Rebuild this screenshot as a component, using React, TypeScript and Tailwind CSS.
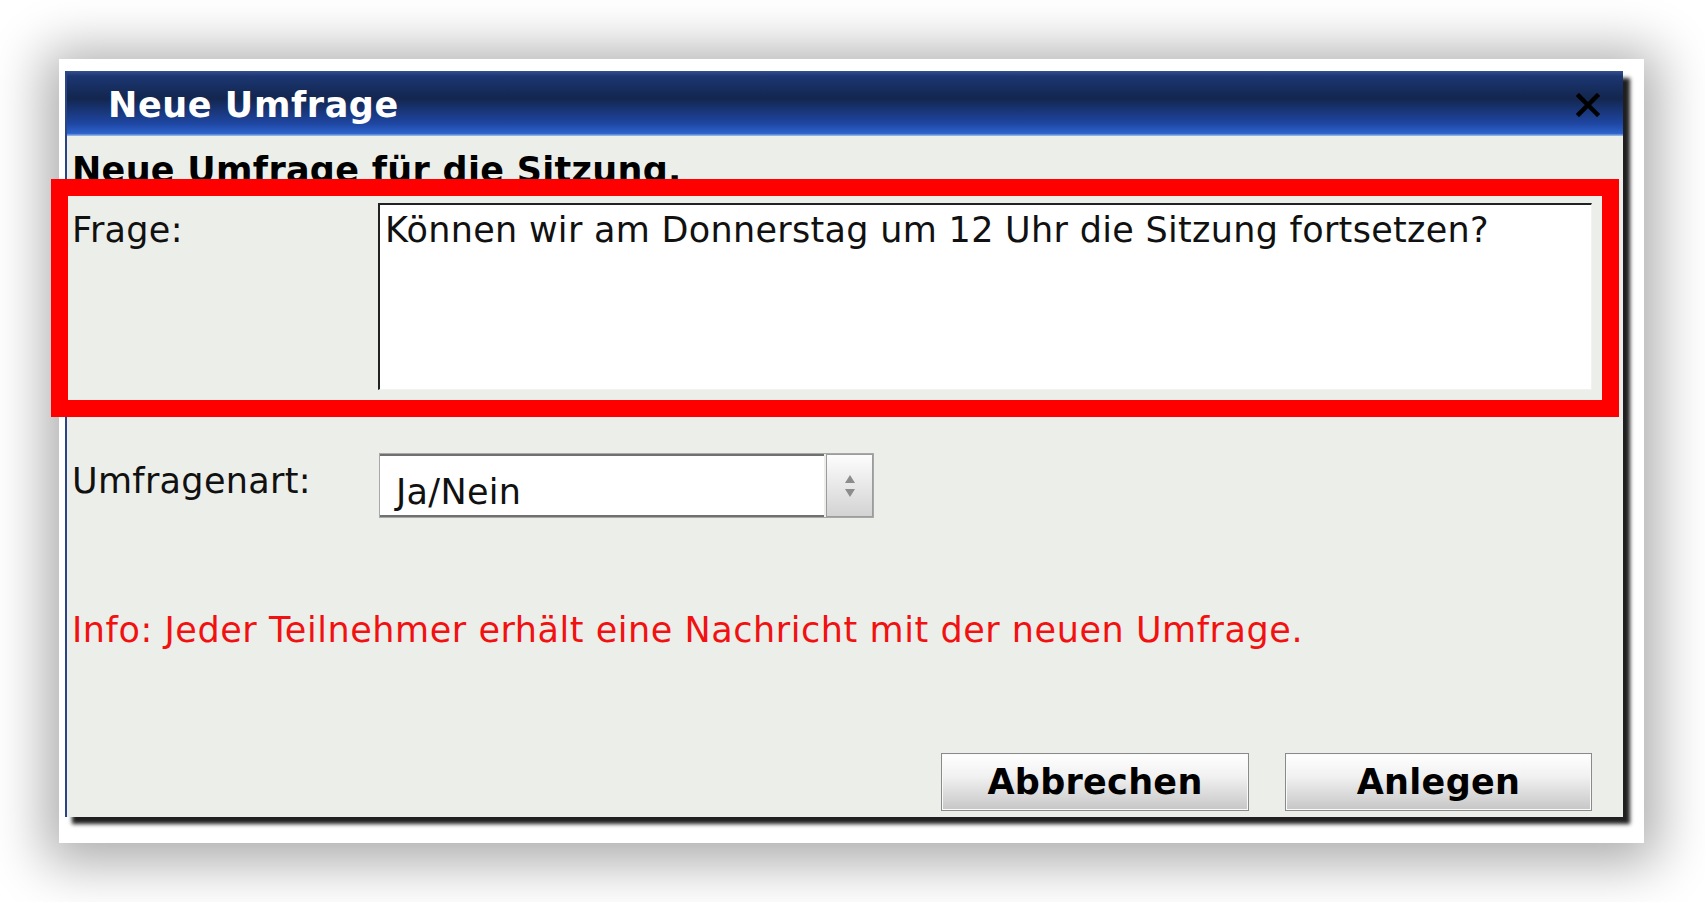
export default function App() {
  return (
    <div className="min-h-screen bg-white pl-[59px] pt-[59px] font-['DejaVu_Sans','Verdana',sans-serif] text-[35px] leading-[40px] tracking-[0.3px] text-[#111]">
      {/* screenshot frame */}
      <div className="relative w-[1585px] h-[784px] bg-white pl-[6px] pt-[12px] shadow-[0_6px_50px_14px_rgba(0,0,0,0.33)]">
        {/* dialog */}
        <div className="flex flex-col w-[1558px] h-[746px] border-l-2 border-[#2b4584] shadow-[7px_7px_4px_rgba(0,0,0,0.88)]">
          {/* title bar */}
          <div className="flex items-center justify-between h-[65px] pl-[41px] pr-[23px] bg-[linear-gradient(to_bottom,#34508c_0%,#1b3672_8%,#13264f_42%,#1e45a0_80%,#2c62cb_96%,#a9c0ea_100%)]">
            <span className="font-bold text-white pt-[2px] tracking-[0.6px]">Neue Umfrage</span>
            <svg width="24" height="24" viewBox="0 0 24 24" className="mt-[2px]">
              <path d="M3 3 L21 21 M21 3 L3 21" stroke="#000" strokeWidth="4.5" strokeLinecap="square" />
            </svg>
          </div>

          {/* body */}
          <div className="flex flex-col flex-1 bg-[#eceee9] pl-[5px]">
            <div className="pt-[14px] font-bold text-black">Neue Umfrage für die Sitzung.</div>

            <div className="flex items-start mt-[13px]">
              <div className="w-[306px] pt-[7px]">Frage:</div>
              <div className="w-[1214px] h-[187px] bg-white border-t-2 border-l-2 border-[#222] border-r border-b border-r-[#f2f2f2] border-b-[#f2f2f2] pl-[5px] pt-[5px]">
                Können wir am Donnerstag um 12 Uhr die Sitzung fortsetzen?
              </div>
            </div>

            <div className="flex items-start mt-[63px]">
              <div className="w-[307px] pt-[8px]">Umfragenart:</div>
              <div className="flex w-[495px] h-[65px] border border-[#a8a8a8]">
                <div className="flex-1 bg-white border-t-2 border-b-2 border-[#707070] pl-[16px] pt-[16px]">Ja/Nein</div>
                <div className="flex flex-col items-center justify-center gap-[6px] w-[47px] ml-[2px] border border-[#9c9c9c] bg-[linear-gradient(to_bottom,#fdfdfd,#d3d3d3)]">
                  <svg width="10" height="8" viewBox="0 0 10 8">
                    <path d="M5 0 L10 8 L0 8 Z" fill="#8c8c8c" />
                  </svg>
                  <svg width="10" height="8" viewBox="0 0 10 8">
                    <path d="M0 0 L10 0 L5 8 Z" fill="#8c8c8c" />
                  </svg>
                </div>
              </div>
            </div>

            <div className="mt-[92px] text-[#f21111] tracking-[0.55px]">
              Info: Jeder Teilnehmer erhält eine Nachricht mit der neuen Umfrage.
            </div>

            <div className="flex justify-end gap-[36px] mt-auto pr-[31px] pb-[6px]">
              <button className="w-[308px] h-[58px] border border-[#8a8a8a] bg-[linear-gradient(to_bottom,#ffffff,#f1f1f1_40%,#c6c6c6)] font-bold text-black shadow-[inset_0_0_0_1px_#fafafa]">
                Abbrechen
              </button>
              <button className="w-[307px] h-[58px] border border-[#8a8a8a] bg-[linear-gradient(to_bottom,#ffffff,#f1f1f1_40%,#c6c6c6)] font-bold text-black shadow-[inset_0_0_0_1px_#fafafa]">
                Anlegen
              </button>
            </div>
          </div>
        </div>

        {/* red highlight annotation */}
        <div className="absolute left-[-8px] top-[120px] w-[1568px] h-[238px] border-[17px] border-[#ff0000]" />
      </div>
    </div>
  )
}
